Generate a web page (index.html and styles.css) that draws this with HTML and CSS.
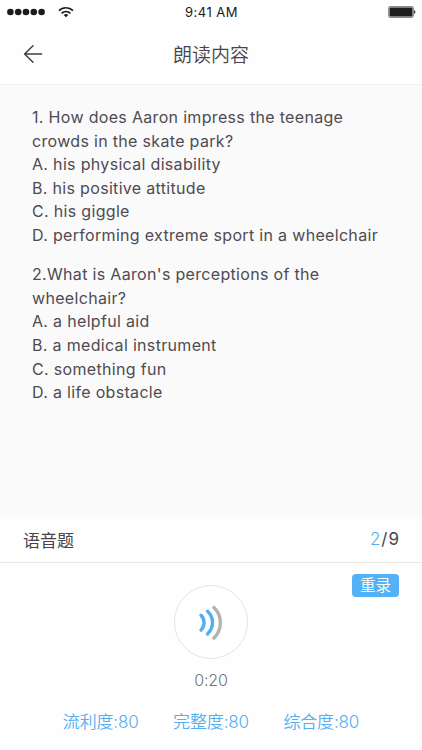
FILE: index.html
```html
<!DOCTYPE html>
<html lang="zh-CN">
<head>
  <meta charset="UTF-8">
  <meta name="viewport" content="width=device-width, initial-scale=1.0">
  <title>朗读内容</title>
  <link rel="stylesheet" href="styles.css">
</head>
<body>
  <div class="app">
    <div class="status-bar">
      <div class="signal">
        <svg class="dots" width="38" height="8" viewBox="0 0 38 8" fill="#1c1a1c">
          <circle cx="3.4" cy="4" r="3.3"/>
          <circle cx="11.2" cy="4" r="3.3"/>
          <circle cx="19" cy="4" r="3.3"/>
          <circle cx="26.8" cy="4" r="3.3"/>
          <circle cx="34.6" cy="4" r="3.3"/>
        </svg>
        <svg width="16" height="12" viewBox="0 0 16 12" fill="none" stroke="#1c1a1c" stroke-width="1.7">
          <path d="M1 4.6a10 10 0 0 1 14 0"/>
          <path d="M3.6 7.3a6.3 6.3 0 0 1 8.8 0"/>
          <path d="M8 11.3L5.7 9a3.3 3.3 0 0 1 4.6 0z" fill="#1c1a1c" stroke="none"/>
        </svg>
      </div>
      <div class="clock">9:41 AM</div>
      <svg class="battery" width="28" height="12" viewBox="0 0 28 12">
        <rect x=".6" y=".6" width="24.8" height="10.8" rx="1.8" fill="#fff" stroke="#8c8a8c" stroke-width="1.1"/>
        <rect x="1.5" y="1.5" width="23" height="9" rx=".8" fill="#1f1d1e"/>
        <path d="M26.2 4c1.5.3 1.5 3.7 0 4z" fill="#1f1d1e"/>
      </svg>
    </div>

    <div class="nav">
      <svg class="back" width="20" height="20" viewBox="0 0 20 20" fill="none" stroke="#413d45" stroke-width="1.5" stroke-linecap="round" stroke-linejoin="round">
        <path d="M10 1.7L1.6 10l8.4 8.3M1.6 10h17"/>
      </svg>
      <h1>朗读内容</h1>
    </div>

    <div class="content">
      <p>1. How does Aaron impress the teenage<br>
        crowds in the skate park?<br>
        A. his physical disability<br>
        B. his positive attitude<br>
        C. his giggle<br>
        D. performing extreme sport in a wheelchair</p>
      <p>2.What is Aaron's perceptions of the<br>
        wheelchair?<br>
        A. a helpful aid<br>
        B. a medical instrument<br>
        C. something fun<br>
        D. a life obstacle</p>
    </div>

    <div class="type-row">
      <span>语音题</span>
      <span class="count"><b>2</b>/9</span>
    </div>

    <div class="recorder">
      <button class="redo">重录</button>
      <button class="play">
        <svg width="30" height="36" viewBox="0 0 30 36" fill="none" stroke="#55aeee" stroke-width="3.4" stroke-linecap="round">
          <path d="M5 11.3a10.5 10.5 0 0 1 0 14.8"/>
          <path d="M11.5 7.2a15.5 15.5 0 0 1 0 22.8"/>
          <path d="M18 3.5a21.5 21.5 0 0 1 0 30.5" stroke="#b3b3b3"/>
        </svg>
      </button>
      <div class="time">0:20</div>
      <div class="scores">
        <span>流利度:80</span>
        <span>完整度:80</span>
        <span>综合度:80</span>
      </div>
    </div>
  </div>
</body>
</html>
```
FILE: styles.css
```css
body {
  margin: 0;
  font-family: Inter, "Noto Sans CJK SC", sans-serif;
  background-color: #fefefe;
  color: #47444b;
}
.app {
  display: flex;
  flex-direction: column;
  height: 750px;
  overflow: hidden;
}
.status-bar {
  display: grid;
  grid-template-columns: 1fr auto 1fr;
  align-items: center;
  height: 24px;
  padding: 0 6px 0 7px;
}
.signal {
  display: flex;
  align-items: center;
  gap: 13px;
}
.clock {
  font-size: 13px;
  letter-spacing: 0.5px;
  color: #1c1a1c;
}
.battery {
  justify-self: end;
}
.nav {
  display: grid;
  grid-template-columns: 40px 1fr 40px;
  align-items: center;
  height: 60px;
  padding: 0 23px;
  border-bottom: 1px solid #f1f1f1;
}
h1 {
  margin: 0;
  padding-top: 3px;
  font-size: 19px;
  font-weight: 350;
  line-height: 28px;
  text-align: center;
}
.content {
  height: 431px;
  padding: 21px 31px 0 32px;
  box-sizing: border-box;
  background-color: #fafafa;
  color: #4e4b52;
  font-size: 16px;
  line-height: 23.6px;
  letter-spacing: 0.32px;
  white-space: nowrap;
}
p {
  margin: 0 0 15.6px;
}
.type-row {
  display: flex;
  justify-content: space-between;
  align-items: center;
  height: 46px;
  padding: 0 23px;
  border-bottom: 1px solid #e6e6e6;
  font-size: 17px;
}
.count {
  letter-spacing: 1px;
  margin-right: -1px;
}
.count b {
  font-weight: 300;
  color: #55b0f0;
}
.recorder {
  position: relative;
  display: flex;
  flex-direction: column;
  align-items: center;
  padding-top: 22px;
}
button {
  padding: 0;
  border: none;
  font-family: inherit;
  cursor: pointer;
}
.redo {
  position: absolute;
  top: 11px;
  right: 23px;
  width: 47px;
  height: 23px;
  border-radius: 4px;
  background-color: #53b2f6;
  color: #fff;
  font-size: 15.5px;
  font-weight: 350;
  line-height: 24px;
}
.play {
  display: flex;
  justify-content: center;
  align-items: center;
  width: 74px;
  height: 74px;
  border: 1px solid #e4e4e4;
  border-radius: 50%;
  background-color: #fff;
}
.time {
  margin-top: 10px;
  font-size: 16px;
  font-weight: 300;
  line-height: 22px;
  letter-spacing: -0.2px;
  color: #77757a;
}
.scores {
  display: flex;
  gap: 34.5px;
  margin-top: 18px;
  font-size: 17px;
  font-weight: 350;
  line-height: 26px;
  letter-spacing: -0.15px;
  color: #55aeee;
}
```
